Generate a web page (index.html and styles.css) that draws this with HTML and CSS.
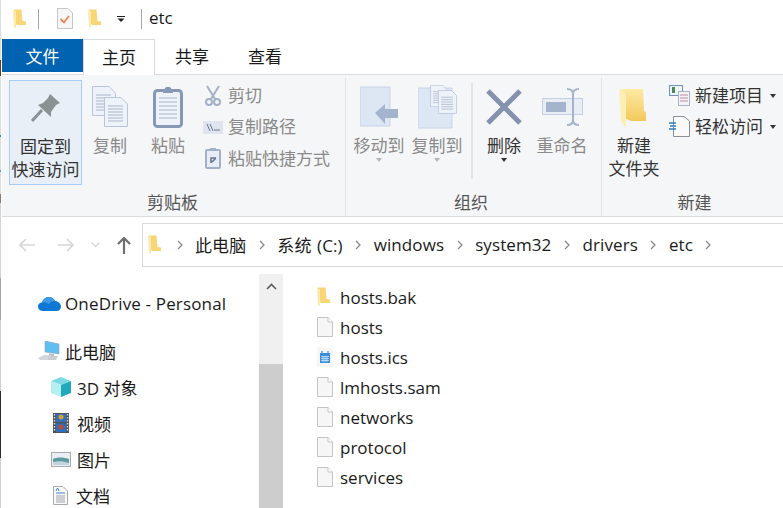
FILE: index.html
```html
<!DOCTYPE html>
<html lang="zh-CN">
<head>
    <meta charset="UTF-8">
    <title>etc</title>
    <link rel="stylesheet" href="styles.css">
</head>
<body>

    <svg class="defs" width="0" height="0">
        <symbol id="folder" viewBox="0 0 13 20">
            <path d="M1 .5H8.5L9.500 12L13 12.500V16H4L1.500 14Z" fill="#f8d677"/>
            <path d="M0 .5L3 2.500V19.500L1 17.500Z" fill="#fde9a8"/>
        </symbol>
        <symbol id="file" viewBox="0 0 16 20">
            <path d="M.5 .5H11L15.5 5V19.5H.5Z" fill="#f6f6f6" stroke="#c4c4c4"/>
            <path d="M11 .5V5H15.5" fill="#fff" stroke="#c4c4c4"/>
        </symbol>
        <symbol id="chev" viewBox="0 0 6 10">
            <path d="M1 1L5 5L1 9" fill="none" stroke="#8a8a8a" stroke-width="1.3"/>
        </symbol>
        <symbol id="page" viewBox="0 0 24 30">
            <path d="M.5 .5H17L23.5 7V29.5H.5Z" fill="#eef2f9" stroke="#b7c4da"/>
            <path d="M4 9H19M4 12H19M4 15H19M4 18H19M4 21H19M4 24H19" stroke="#aab6ca"/>
        </symbol>
    </svg>

    <div class="window">
        <div class="titlebar">
            <svg class="icon-folder"><use href="#folder"/></svg>
            <span class="bar-sep first"></span>
            <svg class="icon-note" viewBox="0 0 16 21">
                <path d="M.5 .5H11L15.5 5V20.5H.5Z" fill="#f7f7f7" stroke="#c6c6c6"/>
                <path d="M3.500 11L7 14.500L12 8" fill="none" stroke="#ee8355" stroke-width="1.800"/>
            </svg>
            <svg class="icon-folder second"><use href="#folder"/></svg>
            <svg class="icon-qat" viewBox="0 0 8 6">
                <path d="M0 .5H8" stroke="#222"/>
                <path d="M.5 2.5H7.5L4 6Z" fill="#222"/>
            </svg>
            <span class="bar-sep"></span>
            <span class="title">etc</span>
        </div>

        <div class="tabs">
            <div class="tab tab-file">文件</div>
            <div class="tab tab-active">主页</div>
            <div class="tab">共享</div>
            <div class="tab">查看</div>
        </div>

        <div class="ribbon">
            <section class="group group-clip">
                <div class="group-body">
                    <div class="rb-btn pin">
                        <div class="rb-icon">
                            <svg width="30" height="28" viewBox="0 0 30 28">
                                <path d="M19 0L29 9L25 11L20 18L20 23L7 11L12 9L17 4Z" fill="#8b9294"/>
                                <path d="M11 16L1 27" stroke="#8b9294" stroke-width="3"/>
                            </svg>
                        </div>
                        <div class="rb-label">固定到<br>快速访问</div>
                    </div>
                    <div class="rb-btn off w56">
                        <div class="rb-icon">
                            <svg width="36" height="42" viewBox="0 0 36 42">
                                <use href="#page" width="24" height="30"/>
                                <use href="#page" x="12" y="11" width="24" height="30"/>
                            </svg>
                        </div>
                        <div class="rb-label">复制</div>
                    </div>
                    <div class="rb-btn off w60">
                        <div class="rb-icon">
                            <svg width="30" height="42" viewBox="0 0 30 42">
                                <rect x="1.5" y="4.5" width="27" height="36" rx="3" fill="#eef2f9" stroke="#8798b6" stroke-width="3"/>
                                <path d="M10 5L13 1H17L20 5V7H10Z" fill="#8798b6"/>
                                <path d="M6 12H24M6 16H24M6 20H24M6 24H24M6 28H24M6 32H24" stroke="#aab6ca"/>
                            </svg>
                        </div>
                        <div class="rb-label">粘贴</div>
                    </div>
                    <div class="rb-small-col">
                        <div class="rb-small off">
                            <span class="small-icon">
                                <svg width="16" height="21" viewBox="0 0 16 21">
                                    <path d="M2 1L10 14M14 1L6 14" stroke="#a3b1c8" stroke-width="2"/>
                                    <circle cx="4" cy="17" r="3" fill="none" stroke="#a3b1c8" stroke-width="2"/>
                                    <circle cx="12" cy="17" r="3" fill="none" stroke="#a3b1c8" stroke-width="2"/>
                                </svg>
                            </span>
                            <span>剪切</span>
                        </div>
                        <div class="rb-small off">
                            <span class="small-icon">
                                <svg width="20" height="13" viewBox="0 0 20 13">
                                    <rect width="20" height="13" fill="#dfe5ef"/>
                                    <path d="M4 3L7 10M7 3L10 10M11 9H17" stroke="#667690"/>
                                </svg>
                            </span>
                            <span>复制路径</span>
                        </div>
                        <div class="rb-small off">
                            <span class="small-icon">
                                <svg width="16" height="21" viewBox="0 0 16 21">
                                    <rect x="1" y="2" width="14" height="18" rx="1" fill="#e8edf5" stroke="#a3b1c8" stroke-width="2"/>
                                    <path d="M5 0H11V3H5Z" fill="#a3b1c8"/>
                                    <path d="M6 15V10H11M11 10L7 14" fill="none" stroke="#667690" stroke-width="1.6"/>
                                </svg>
                            </span>
                            <span>粘贴快捷方式</span>
                        </div>
                    </div>
                </div>
                <div class="group-label">剪贴板</div>
            </section>

            <section class="group group-org">
                <div class="group-body">
                    <div class="rb-btn off w58">
                        <div class="rb-icon">
                            <svg width="39" height="43" viewBox="0 0 39 43">
                                <path d="M0 1H30V40H0Z" fill="#dde6f3" stroke="#c8d4e6"/>
                                <path d="M15 27L25 18V23H38V32H25V38Z" fill="#a5b4cd"/>
                            </svg>
                        </div>
                        <div class="rb-label">移动到</div>
                        <div class="rb-caret"></div>
                    </div>
                    <div class="rb-btn off w58">
                        <div class="rb-icon">
                            <svg width="39" height="44" viewBox="0 0 39 44">
                                <path d="M0 3H34V43H0Z" fill="#dde6f3" stroke="#c8d4e6"/>
                                <use href="#page" x="12" width="18" height="22"/>
                                <use href="#page" x="20" y="4" width="19" height="26"/>
                            </svg>
                        </div>
                        <div class="rb-label">复制到</div>
                        <div class="rb-caret"></div>
                    </div>
                    <span class="rb-sep"></span>
                    <div class="rb-btn w58">
                        <div class="rb-icon">
                            <svg width="36" height="36" viewBox="0 0 36 36">
                                <path d="M2 2L34 34M34 2L2 34" stroke="#8592ad" stroke-width="5"/>
                            </svg>
                        </div>
                        <div class="rb-label">删除</div>
                        <div class="rb-caret dark"></div>
                    </div>
                    <div class="rb-btn off w58">
                        <div class="rb-icon">
                            <svg width="41" height="38" viewBox="0 0 41 38">
                                <rect x=".5" y="10.5" width="40" height="16" fill="#e9eef6" stroke="#c4d0e2"/>
                                <rect x="4" y="14" width="20" height="10" fill="#a5b4cd"/>
                                <path d="M25 1C29 1 31 3 31 6V32C31 35 29 37 25 37M37 1C33 1 31 3 31 6M31 32C31 35 33 37 37 37" fill="none" stroke="#a5b4cd" stroke-width="2"/>
                            </svg>
                        </div>
                        <div class="rb-label">重命名</div>
                    </div>
                </div>
                <div class="group-label">组织</div>
            </section>

            <section class="group group-new">
                <div class="group-body">
                    <div class="rb-btn w56">
                        <div class="rb-icon">
                            <svg class="big-folder" width="27" height="39" viewBox="0 0 27 39">
                                <defs>
                                    <linearGradient id="bigFolder" x1="0" y1="0" x2="0" y2="1">
                                        <stop offset="0" stop-color="#fdeaa4"/>
                                        <stop offset="1" stop-color="#f3c85c"/>
                                    </linearGradient>
                                </defs>
                                <path d="M2 0H24L25 22L27 23V32H12L3 28Z" fill="url(#bigFolder)"/>
                                <path d="M0 0L7 5V39L2 32Z" fill="#fdeeb4"/>
                            </svg>
                        </div>
                        <div class="rb-label">新建<br>文件夹</div>
                    </div>
                    <div class="rb-small-col new-col">
                        <div class="rb-small">
                            <svg width="21" height="21" viewBox="0 0 21 21">
                                <rect x=".5" y=".5" width="13" height="10" fill="#eef4fb" stroke="#6f93b8"/>
                                <rect x="3" y="2" width="3" height="6" fill="#4a8a52"/>
                                <rect x="9.5" y="6.5" width="11" height="14" fill="#f2f4f8" stroke="#a8b2c2"/>
                                <path d="M11 10H19M11 13H19M11 16H19" stroke="#c38ca0"/>
                            </svg>
                            <span>新建项目</span>
                            <i class="small-caret"></i>
                        </div>
                        <div class="rb-small">
                            <svg width="21" height="21" viewBox="0 0 21 21">
                                <path d="M4.5 .5H15L20.5 5V20.5H4.5Z" fill="#fafafa" stroke="#8a8f96"/>
                                <path d="M0 7H7M1 10H7M0 13H7" stroke="#2f7fc4" stroke-width="1.4"/>
                            </svg>
                            <span>轻松访问</span>
                            <i class="small-caret"></i>
                        </div>
                    </div>
                </div>
                <div class="group-label">新建</div>
            </section>
        </div>

        <div class="addr-row">
            <div class="nav-btns">
                <svg width="16" height="14" viewBox="0 0 16 14"><path d="M7 1L1 7L7 13M1 7H16" fill="none" stroke="#d6d6d6" stroke-width="1.6"/></svg>
                <svg class="fwd" width="16" height="14" viewBox="0 0 16 14"><path d="M9 1L15 7L9 13M0 7H15" fill="none" stroke="#d6d6d6" stroke-width="1.6"/></svg>
                <svg class="down" width="9" height="6" viewBox="0 0 9 6"><path d="M.5 .5L4.5 4.5L8.5 .5" fill="none" stroke="#d6d6d6" stroke-width="1.3"/></svg>
                <svg class="up" width="14" height="17" viewBox="0 0 14 17"><path d="M1 7L7 1L13 7M7 1V17" fill="none" stroke="#6e6e6e" stroke-width="2.2"/></svg>
            </div>
            <div class="addr-box">
                <svg class="icon-folder"><use href="#folder"/></svg>
                <svg class="crumb-chev"><use href="#chev"/></svg>
                <span>此电脑</span>
                <svg class="crumb-chev"><use href="#chev"/></svg>
                <span class="drive">系统 (C:)</span>
                <svg class="crumb-chev"><use href="#chev"/></svg>
                <span>windows</span>
                <svg class="crumb-chev"><use href="#chev"/></svg>
                <span>system32</span>
                <svg class="crumb-chev"><use href="#chev"/></svg>
                <span>drivers</span>
                <svg class="crumb-chev"><use href="#chev"/></svg>
                <span>etc</span>
                <svg class="crumb-chev"><use href="#chev"/></svg>
            </div>
        </div>

        <div class="main">
            <nav class="sidebar">
                <div class="side-item top">
                    <svg width="23" height="15" viewBox="0 0 23 15">
                        <path d="M5 15C1 15 0 12 0 10.500C0 8 2 6.500 4 6.500C5 3 8 1 11 1C14 1 16 3 17 5C20 5 23 7.500 23 10.500C23 13 21 15 19 15Z" fill="#0f78d4"/>
                        <path d="M4 6.500C5 3 8 1 11 1C14 1 16 3 17 5C14 5 12 6 11 8C9 6.500 6 6 4 6.500Z" fill="#3a9ce6"/>
                    </svg>
                    <span>OneDrive - Personal</span>
                </div>
                <div class="side-item pc">
                    <svg width="22" height="20" viewBox="0 0 22 20">
                        <path d="M7 0L21 3V13L7 11Z" fill="#62bdf0" stroke="#8fa6ba" stroke-width=".6"/>
                        <path d="M11 12.500L16 13V15H11Z" fill="#b9c2ca"/>
                        <path d="M0 17L6 14H13L9 19H2Z" fill="#d4d8dc"/>
                        <path d="M11 15H20L18 19H9Z" fill="#c9cdd2"/>
                    </svg>
                    <span>此电脑</span>
                </div>
                <div class="side-item sub">
                    <svg width="20" height="20" viewBox="0 0 20 20">
                        <path d="M10 0L20 4L10 8L0 4Z" fill="#7fd9e4"/>
                        <path d="M0 4L10 8V20L0 16Z" fill="#b4f0f2"/>
                        <path d="M20 4L10 8V20L20 16Z" fill="#1fa9bb"/>
                    </svg>
                    <span>3D 对象</span>
                </div>
                <div class="side-item sub">
                    <svg width="16" height="20" viewBox="0 0 16 20" class="narrow">
                        <rect width="16" height="20" fill="#4f5357"/>
                        <rect x="3" y="1" width="10" height="8" fill="#2f6fc0"/>
                        <rect x="3" y="10.500" width="10" height="8.500" fill="#2f6fc0"/>
                        <circle cx="8" cy="4" r="2.500" fill="#d9a02c"/>
                        <circle cx="8" cy="14" r="2.500" fill="#c8482c"/>
                        <path d="M1.500 1V19M14.500 1V19" stroke="#dcdcdc" stroke-width="1.400" stroke-dasharray="1.500 1.500"/>
                    </svg>
                    <span>视频</span>
                </div>
                <div class="side-item sub">
                    <svg width="20" height="15" viewBox="0 0 20 15">
                        <rect x=".5" y=".5" width="19" height="14" fill="#e9eff4" stroke="#a9a9a9"/>
                        <path d="M2 7C6 5 12 5 18 7V13H2Z" fill="#5f9aa0"/>
                        <path d="M2 10C7 9 12 9 18 11V13H2Z" fill="#c2d4dc"/>
                    </svg>
                    <span>图片</span>
                </div>
                <div class="side-item sub">
                    <svg width="15" height="19" viewBox="0 0 15 19" class="narrow">
                        <path d="M.5 .5H10L14.5 5V18.500H.5Z" fill="#fafafa" stroke="#a9a9a9"/>
                        <path d="M3 5L4.500 2L6 5M3 7H12" fill="none" stroke="#3a80c8"/>
                        <path d="M3 10H12M3 12H12M3 14H12M3 16H12" stroke="#9aa3ad"/>
                    </svg>
                    <span>文档</span>
                </div>
            </nav>
            <div class="scrollbar">
                <div class="scroll-track">
                    <svg width="11" height="7" viewBox="0 0 11 7"><path d="M1 6L5.500 1.500L10 6" fill="none" stroke="#5f5f5f" stroke-width="1.600"/></svg>
                </div>
                <div class="scroll-thumb"></div>
            </div>
            <div class="files">
                <div class="file-row"><svg class="file-folder"><use href="#folder"/></svg><span>hosts.bak</span></div>
                <div class="file-row"><svg class="file-doc"><use href="#file"/></svg><span>hosts</span></div>
                <div class="file-row">
                    <svg class="file-doc" viewBox="0 0 16 20">
                        <rect width="16" height="20" fill="#f7f7f7"/>
                        <rect x="3" y="6" width="10" height="10" fill="#3a8fdc"/>
                        <path d="M5 4V7M11 4V7" stroke="#3a8fdc" stroke-width="1.200"/>
                        <path d="M4 9.500H12M4 11.500H12M4 13.500H12M6 9V15M8 9V15M10 9V15" stroke="#d8e9f8" stroke-width=".7"/>
                    </svg>
                    <span>hosts.ics</span>
                </div>
                <div class="file-row"><svg class="file-doc"><use href="#file"/></svg><span>lmhosts.sam</span></div>
                <div class="file-row"><svg class="file-doc"><use href="#file"/></svg><span>networks</span></div>
                <div class="file-row"><svg class="file-doc"><use href="#file"/></svg><span>protocol</span></div>
                <div class="file-row"><svg class="file-doc"><use href="#file"/></svg><span>services</span></div>
            </div>
        </div>
    </div>

</body>
</html>
```

FILE: styles.css
```css
body {
    margin: 0;
    font-family: "Open Sans", "Noto Sans CJK SC", sans-serif;
    font-size: 17px;
    color: #1a1a1a;
    background: #fff;
    overflow: hidden;
}
.defs {
    display: block;
    height: 0;
}
/* left edge is the desktop showing next to the window */
.window {
    width: 783px;
    height: 508px;
    overflow: hidden;
    display: flex;
    flex-direction: column;
    box-sizing: border-box;
    padding-left: 1px;
    border-left: 1px solid;
    border-image: linear-gradient(to bottom,
        #dcdcdc 61px, #6b3a20 61px, #6b3a20 77px,
        #dcdcdc 77px, #dcdcdc 135px, #3a80c8 135px, #3a80c8 137px,
        #dcdcdc 137px, #dcdcdc 170px, #5a9ad0 170px, #5a9ad0 172px,
        #dcdcdc 172px, #dcdcdc 194px, #8a7a70 194px, #8a7a70 203px,
        #d4d4d4 203px, #d4d4d4 278px, #a5a5a5 278px, #a5a5a5 320px,
        #d0d0d0 320px, #d0d0d0 390px, #2a2a35 390px, #2a2a35 457px,
        #d0d0d0 457px) 1;
}
svg {
    flex: none;
    display: block;
}
.icon-folder {
    width: 13px;
    height: 20px;
}

/* title bar */
.titlebar {
    height: 37px;
    display: flex;
    align-items: center;
    padding-left: 11px;
}
.bar-sep {
    width: 1px;
    height: 20px;
    background: #a8a8a8;
    margin-left: 12px;
}
.bar-sep.first {
    margin-right: 18px;
}
.icon-note {
    width: 16px;
    height: 21px;
}
.icon-folder.second {
    margin-left: 15px;
}
.icon-qat {
    width: 8px;
    height: 6px;
    margin-left: 16px;
    margin-right: 4px;
}
.title {
    margin-left: 7px;
    line-height: 20px;
    padding-bottom: 2px;
}

/* tabs */
.tabs {
    height: 36px;
    display: flex;
    margin-top: 2px;
}
.tab {
    width: 72px;
    height: 33px;
    line-height: 35px;
    text-align: center;
    box-sizing: border-box;
}
.tab-file {
    width: 81px;
    background: #0063b1;
    color: #fff;
}
.tab-active {
    height: 36px;
    background: #fff;
    border: 1px solid #dadbdc;
    border-bottom: none;
    position: relative;
    z-index: 1;
}
.tab-active + .tab {
    width: 74px;
}
.tab-active + .tab + .tab {
    width: 72px;
}

/* ribbon */
.ribbon {
    height: 143px;
    margin-top: -1px;
    box-sizing: border-box;
    background: #f5f6f7;
    border-top: 1px solid #dadbdc;
    border-bottom: 1px solid #dadbdc;
    display: flex;
}
.group {
    display: flex;
    flex-direction: column;
    box-sizing: border-box;
    border-right: 1px solid #dfe0e1;
    margin-top: 3px;
}
.group-clip {
    width: 344px;
    padding-left: 7px;
}
.group-org {
    width: 256px;
    padding-left: 4px;
}
.group-new {
    flex: 1;
    border-right: none;
    padding-left: 4px;
}
.group-body {
    display: flex;
    height: 107px;
    padding-top: 2px;
}
.group-label {
    text-align: center;
    color: #555;
    line-height: 22px;
    padding-top: 5px;
}
.group-clip .group-label {
    margin-left: -7px;
    padding-right: 2px;
}
.group-org .group-label {
    margin-left: -4px;
    padding-right: 5px;
}
.rb-btn {
    box-sizing: border-box;
    height: 105px;
    text-align: center;
    white-space: nowrap;
    color: #333;
    flex: none;
}
.rb-btn.off {
    color: #8a8a8a;
}
.pin {
    width: 73px;
    background: #e8eff7;
    border: 1px solid #a4cef9;
}
.w56 {
    width: 56px;
}
.w58 {
    width: 58px;
}
.w60 {
    width: 60px;
}
.rb-icon {
    height: 54px;
    display: flex;
    align-items: center;
    justify-content: center;
}
.big-folder {
    margin-top: 3px;
    margin-right: 4px;
}
.rb-label {
    line-height: 23px;
}
.rb-caret {
    width: 0;
    margin: 1px auto 0;
    border: 3.500px solid transparent;
    border-top: 4px solid #b5b5b5;
    border-bottom: none;
}
.rb-caret.dark {
    border-top-color: #333;
}
.rb-sep {
    width: 2px;
    height: 96px;
    background: #e3e4e5;
    margin: 3px 2px 0 5px;
}
.rb-small-col {
    margin-left: 5px;
    display: flex;
    flex-direction: column;
}
.new-col {
    margin-left: 7px;
}
.rb-small {
    height: 31.500px;
    display: flex;
    align-items: center;
    gap: 5px;
    white-space: nowrap;
    color: #333;
    line-height: 22px;
}
.new-col .rb-small {
    height: 31px;
}
.rb-small.off {
    color: #8a8a8a;
}
.small-icon {
    width: 20px;
    display: flex;
    justify-content: center;
}
.small-caret {
    margin-left: 2px;
    border: 3.500px solid transparent;
    border-top: 4px solid #333;
    border-bottom: none;
}

/* address bar */
.addr-row {
    height: 50px;
    padding-top: 6px;
    box-sizing: border-box;
    display: flex;
}
.nav-btns {
    width: 140px;
    height: 44px;
    flex: none;
    display: flex;
    align-items: center;
    padding-left: 17px;
    box-sizing: border-box;
}
.fwd {
    margin-left: 23px;
}
.down {
    margin-left: 17px;
}
.up {
    margin-left: 17px;
}
.addr-box {
    flex: 1;
    height: 44px;
    box-sizing: border-box;
    border: 1px solid #d9d9d9;
    border-right: none;
    display: flex;
    align-items: center;
    gap: 12.500px;
    padding-left: 5px;
    padding-bottom: 2px;
    white-space: nowrap;
    letter-spacing: .1px;
}
.addr-box svg {
    margin-top: 2px;
}
.addr-box .icon-folder {
    margin-right: 3px;
}
.drive {
    word-spacing: 1px;
}
.crumb-chev {
    width: 6px;
    height: 10px;
}

/* main area */
.main {
    flex: 1;
    display: flex;
    min-height: 0;
    padding-top: 7px;
}
.sidebar {
    width: 257px;
    flex: none;
    padding-top: 11px;
}
.side-item {
    height: 36px;
    display: flex;
    align-items: center;
    gap: 5px;
    padding-left: 36px;
    white-space: nowrap;
}
.side-item.top {
    margin-bottom: 12px;
    gap: 4px;
    letter-spacing: .15px;
}
.side-item.sub {
    padding-left: 49px;
    gap: 6px;
}
.side-item svg.narrow {
    margin-left: 2px;
    margin-right: 2px;
}
.scrollbar {
    width: 24px;
    flex: none;
    background: #f0f0f0;
}
.scroll-track {
    height: 90px;
    display: flex;
    justify-content: center;
    padding-top: 9px;
    box-sizing: border-box;
}
.scroll-thumb {
    height: 160px;
    background: #cdcdcd;
}
.files {
    flex: 1;
    padding: 8px 0 0 34px;
}
.file-row {
    height: 30px;
    display: flex;
    align-items: center;
    gap: 7px;
}
.file-doc {
    width: 16px;
    height: 20px;
}
.file-folder {
    width: 13px;
    height: 20px;
    margin-right: 3px;
}
```
